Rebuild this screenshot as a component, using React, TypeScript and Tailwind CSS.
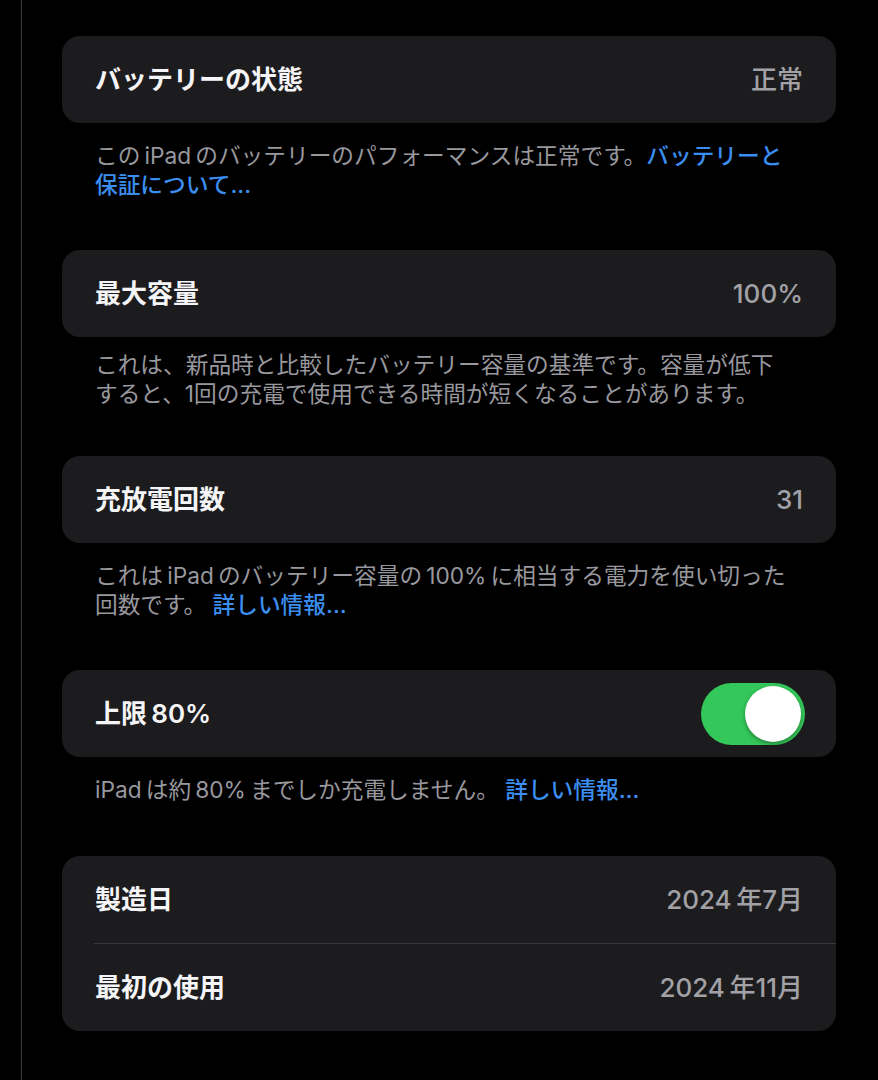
import React from 'react';

const FONT = "font-['Inter','Noto_Sans_CJK_JP',sans-serif]";
// iOS puts a narrow gap between kana/kanji and latin text
const T = '\u2009';

function Toggle({ on }: { on: boolean }) {
    return (
        <div className={`relative w-[104px] h-[62px] rounded-full ${on ? 'bg-[#34c759]' : 'bg-[#39393d]'}`}>
            <div className="absolute top-[3px] right-[4px] w-[56px] h-[56px] rounded-full bg-white shadow-[0_2px_4px_rgba(0,0,0,0.35)]" />
        </div>
    );
}

function Row({ label, value, children }: { label: string; value?: string; children?: React.ReactNode }) {
    return (
        <div className="h-[87px] flex items-center justify-between px-[33px]">
            <span className="text-[26px] font-semibold text-[#f5f5f7]">{label}</span>
            {value && <span className="text-[26px] font-medium text-[#a1a1a6]">{value}</span>}
            {children}
        </div>
    );
}

function Card({ children }: { children: React.ReactNode }) {
    return <div className="rounded-[18px] bg-[#1c1c1e] overflow-hidden">{children}</div>;
}

function Note({ children, className }: { children: React.ReactNode; className: string }) {
    return (
        <p className={`px-[33px] text-[22.7px] leading-[29px] text-[#98989e] whitespace-nowrap ${className}`}>
            {children}
        </p>
    );
}

const Link = ({ children }: { children: React.ReactNode }) => (
    <span className="text-[#3b8ef0] font-medium">{children}</span>
);

export default function App() {
    return (
        <div className={`min-h-screen bg-black flex ${FONT}`}>
            <div className="w-[21px] shrink-0" />
            <div className="flex-1 border-l border-[#3a3a3c] pl-[40px] pr-[42px] pt-[36px] pb-[49px]">
                {/* Battery health */}
                <Card>
                    <Row label="バッテリーの状態" value="正常" />
                </Card>
                <Note className="pt-[18px] pb-[51px]">
                    {`この${T}iPad${T}のバッテリーのパフォーマンスは正常です。`}<Link>バッテリーと</Link>
                    <br />
                    <Link>保証について...</Link>
                </Note>

                {/* Max capacity */}
                <Card>
                    <Row label="最大容量" value="100%" />
                </Card>
                <Note className="pt-[13px] pb-[48px]">
                    これは、新品時と比較したバッテリー容量の基準です。容量が低下
                    <br />
                    すると、1回の充電で使用できる時間が短くなることがあります。
                </Note>

                {/* Cycle count */}
                <Card>
                    <Row label="充放電回数" value="31" />
                </Card>
                <Note className="pt-[18px] pb-[51px]">
                    {`これは${T}iPad${T}のバッテリー容量の${T}100%${T}に相当する電力を使い切った`}
                    <br />
                    回数です。 <Link>詳しい情報...</Link>
                </Note>

                {/* 80% limit */}
                <Card>
                    <div className="h-[87px] flex items-center justify-between pl-[33px] pr-[31px]">
                        <span className="text-[26px] font-semibold text-[#f5f5f7]">{`上限${T}80%`}</span>
                        <Toggle on />
                    </div>
                </Card>
                <Note className="pt-[18px] pb-[52px]">
                    {`iPad${T}は約${T}80%${T}までしか充電しません。 `}<Link>詳しい情報...</Link>
                </Note>

                {/* Dates */}
                <Card>
                    <Row label="製造日" value={`2024${T}年7月`} />
                    <div className="ml-[32px] h-px bg-[#38383a]" />
                    <Row label="最初の使用" value={`2024${T}年11月`} />
                </Card>
            </div>
        </div>
    );
}
